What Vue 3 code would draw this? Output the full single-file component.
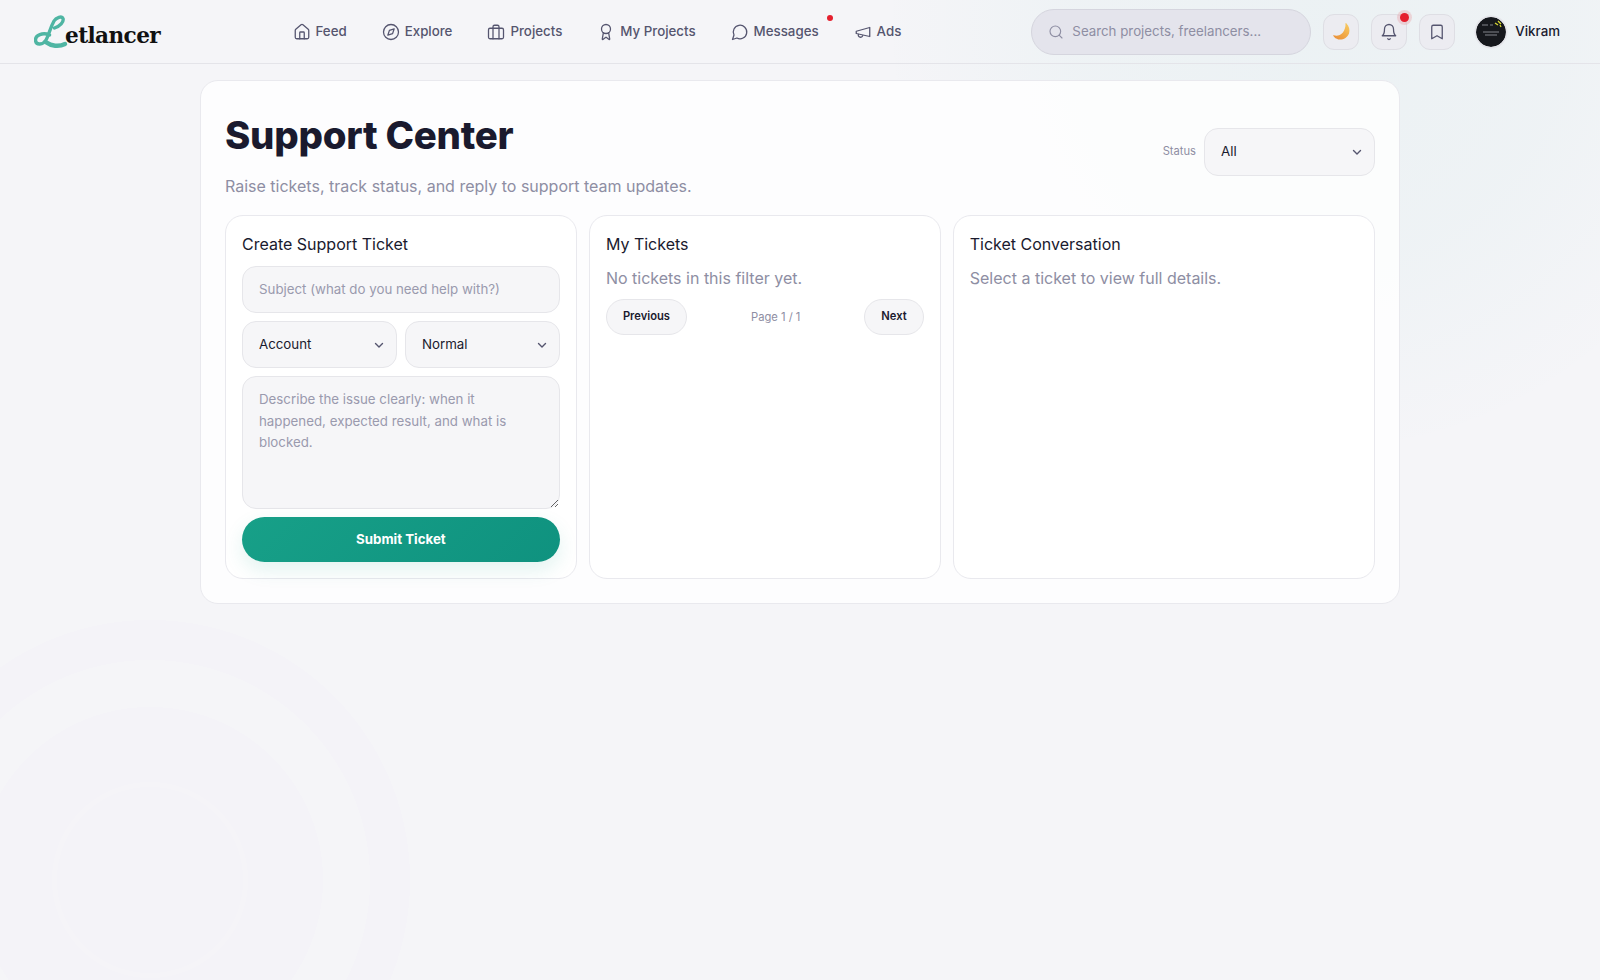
<template>
  <div class="page">
    <header class="topbar">
      <div class="logo" aria-label="Letlancer">
        <svg class="logo-mark" viewBox="0 0 34 36" fill="none" stroke="#4fb5a3" stroke-linecap="round">
          <path stroke-width="3.400" d="M15.500 21C9 18 1 21 1.500 26.500C2 31.500 9 31 12 26C15 21 16 14 20 7C22 3.500 28 1.500 29 4.500C30 8 26 12 20.500 14"/>
          <path stroke-width="4.400" d="M12.500 28.500C17 32 25 33 31 30"/>
        </svg>
        <span class="logo-word">etlancer</span>
      </div>
      <nav class="nav">
        <a v-for="item in navItems" :key="item.label" class="nav-item">
          <svg class="icon" viewBox="0 0 24 24"><path v-for="d in item.paths" :key="d" :d="d" /></svg>
          <span class="nudge">{{ item.label }}</span>
          <i v-if="item.dot" class="nav-dot"></i>
        </a>
      </nav>
      <div class="top-actions">
        <label class="search">
          <svg class="icon search-icon" viewBox="0 0 24 24"><path d="M19 11a8 8 0 1 1-16 0a8 8 0 1 1 16 0" /><path d="m21 21-4.300-4.300" /></svg>
          <input type="text" placeholder="Search projects, freelancers..." />
        </label>
        <button class="icon-btn" type="button" aria-label="Theme">
          <svg class="moon" viewBox="0 0 24 24">
            <defs>
              <linearGradient id="moonFill" x1="0.9" y1="0" x2="0.2" y2="1">
                <stop offset="0" stop-color="#f7cc62" />
                <stop offset="0.55" stop-color="#f2aa48" />
                <stop offset="1" stop-color="#e9913a" />
              </linearGradient>
            </defs>
            <path fill="url(#moonFill)" d="M18 1.500C21.500 5 23 10 21.500 14.500C19.500 20 13.500 23 8 22C5.500 21.500 3 20 1.500 17.500C1.200 17 1.600 16.500 2.200 16.700C6 18 10.500 17 13.500 13.500C16 10.500 17.500 6 17 2C17 1.500 17.500 1.200 18 1.500Z" />
          </svg>
        </button>
        <button class="icon-btn has-badge" type="button" aria-label="Notifications">
          <svg class="icon" viewBox="0 0 24 24"><path d="M6 8a6 6 0 0 1 12 0c0 7 3 9 3 9H3s3-2 3-9" /><path d="M10.300 21a1.940 1.940 0 0 0 3.400 0" /></svg>
          <i class="badge"></i>
        </button>
        <button class="icon-btn" type="button" aria-label="Saved">
          <svg class="icon" viewBox="0 0 24 24"><path d="m19 21-7-4-7 4V5a2 2 0 0 1 2-2h10a2 2 0 0 1 2 2v16z" /></svg>
        </button>
        <div class="user">
          <svg class="avatar" viewBox="0 0 30 30">
            <circle cx="15" cy="15" r="15" fill="#16181d" />
            <path d="M6 8h6M14 8h3M7 15h16M9 18h12" stroke="#cfd2d6" stroke-width="0.6" fill="none" />
            <path d="M19 6l3 2M22 4l3 3M24 8l1 2" stroke="#d8d832" stroke-width="1.300" fill="none" />
          </svg>
          <span class="nudge">Vikram</span>
        </div>
      </div>
    </header>

    <main class="panel">
      <div class="panel-head">
        <div>
          <h1>Support Center</h1>
          <p class="subtitle">Raise tickets, track status, and reply to support team updates.</p>
        </div>
        <label class="status">
          <span class="nudge">Status</span>
          <select class="field select status-select">
            <option>All</option>
          </select>
        </label>
      </div>

      <div class="columns">
        <section class="card">
          <h2>Create Support Ticket</h2>
          <form class="form" @submit.prevent>
            <input class="field" type="text" placeholder="Subject (what do you need help with?)" />
            <div class="form-row">
              <select class="field select"><option>Account</option></select>
              <select class="field select"><option>Normal</option></select>
            </div>
            <textarea class="field area" placeholder="Describe the issue clearly: when it happened, expected result, and what is blocked."></textarea>
            <button class="submit" type="submit">Submit Ticket</button>
          </form>
        </section>

        <section class="card">
          <h2>My Tickets</h2>
          <p class="muted">No tickets in this filter yet.</p>
          <div class="pager">
            <button class="pill" type="button">Previous</button>
            <span>Page 1 / 1</span>
            <button class="pill" type="button">Next</button>
          </div>
        </section>

        <section class="card">
          <h2>Ticket Conversation</h2>
          <p class="muted">Select a ticket to view full details.</p>
        </section>
      </div>
    </main>
  </div>
</template>

<script setup>
const navItems = [
  {
    label: 'Feed',
    paths: [
      'M15 21v-8a1 1 0 0 0-1-1h-4a1 1 0 0 0-1 1v8',
      'M3 10a2 2 0 0 1 .709-1.528l7-5.999a2 2 0 0 1 2.582 0l7 5.999A2 2 0 0 1 21 10v9a2 2 0 0 1-2 2H5a2 2 0 0 1-2-2z',
    ],
  },
  {
    label: 'Explore',
    paths: [
      'M22 12a10 10 0 1 1-20 0a10 10 0 1 1 20 0',
      'm16.240 7.760-2.120 6.360-6.360 2.120 2.120-6.360 6.360-2.120z',
    ],
  },
  {
    label: 'Projects',
    paths: [
      'M4 7h16a2 2 0 0 1 2 2v10a2 2 0 0 1-2 2H4a2 2 0 0 1-2-2V9a2 2 0 0 1 2-2z',
      'M16 21V5a2 2 0 0 0-2-2h-4a2 2 0 0 0-2 2v16',
    ],
  },
  {
    label: 'My Projects',
    paths: [
      'm15.477 12.890 1.515 8.526a.5.5 0 0 1-.81.470l-3.580-2.687a1 1 0 0 0-1.197 0l-3.586 2.686a.5.5 0 0 1-.81-.469l1.514-8.526',
      'M18 8a6 6 0 1 1-12 0a6 6 0 1 1 12 0',
    ],
  },
  { label: 'Messages', dot: true, paths: ['M7.900 20A9 9 0 1 0 4 16.100L2 22Z'] },
  { label: 'Ads', paths: ['m3 11 18-5v12L3 14v-3z', 'M11.600 16.800a3 3 0 1 1-5.800-1.600'] },
]
</script>

<style>
html, body { margin: 0; background: #f5f5f8; }
</style>

<style scoped>
* { box-sizing: border-box; }
.page {
  min-height: 980px;
  font-family: Inter, "Liberation Sans", sans-serif;
  color: #1a1a2e;
  background:
    radial-gradient(circle 440px at 1320px 20px, rgba(30, 165, 150, 0.045) 0%, rgba(30, 165, 150, 0.03) 55%, transparent 100%),
    radial-gradient(circle at 150px 880px, #f4f3f8 0 93px, #f5f4f8 93px 98px, #f4f3f8 98px 173px, #f5f5f8 173px 220px, #f4f3f8 220px 260px, transparent 260px),
    #f5f5f8;
}
.topbar {
  height: 64px;
  display: flex;
  align-items: center;
  padding: 0 40px 0 34px;
  border-bottom: 1px solid #e4e4e9;
}
.logo { width: 258.500px; flex: none; display: flex; align-items: flex-end; height: 36px; }
.logo-mark { width: 34px; height: 36px; flex: none; }
.logo-word {
  font-family: "DejaVu Serif", serif;
  font-weight: 700;
  font-size: 21.600px;
  line-height: 26px;
  letter-spacing: -0.6px;
  color: #111;
  margin-left: -3px;
  margin-bottom: 1px;
}
.nav { display: flex; align-items: center; gap: 35px; }
.nav-item {
  position: relative;
  display: flex;
  align-items: center;
  gap: 5px;
  font-size: 13.300px;
  font-weight: 500;
  color: #55556f;
  white-space: nowrap;
}
.nudge { padding-bottom: 2px; }
.icon {
  width: 18px;
  height: 18px;
  fill: none;
  stroke: #55556f;
  stroke-width: 1.700;
  stroke-linecap: round;
  stroke-linejoin: round;
  flex: none;
}
.nav-dot {
  position: absolute;
  right: -14px;
  top: -8px;
  width: 6px;
  height: 6px;
  border-radius: 50%;
  background: #e5202e;
}
.top-actions { margin-left: auto; display: flex; align-items: center; gap: 12px; }
.search {
  width: 280px;
  height: 46px;
  display: flex;
  align-items: center;
  gap: 8px;
  padding: 0 16px;
  border-radius: 23px;
  background: #e4e4ec;
  border: 1px solid #d5d5de;
}
.search-icon { stroke: #8e8ea3; width: 16px; height: 16px; }
.search input {
  flex: 1;
  min-width: 0;
  border: 0;
  outline: 0;
  background: transparent;
  padding: 0 0 2px;
  font: 400 13.300px Inter, "Liberation Sans", sans-serif;
  color: #1a1a2e;
}
.search input::placeholder { color: #8e8ea3; opacity: 1; }
.icon-btn {
  position: relative;
  width: 36px;
  height: 36px;
  padding: 0;
  display: flex;
  align-items: center;
  justify-content: center;
  background: #ececf1;
  border: 1px solid #dedee4;
  border-radius: 11px;
}
.moon { width: 19px; height: 19px; }
.badge {
  position: absolute;
  top: -2px;
  right: -3px;
  width: 9px;
  height: 9px;
  border-radius: 50%;
  background: #e5202e;
  box-shadow: 0 0 0 3px rgba(229, 32, 46, 0.14);
}
.user {
  display: flex;
  align-items: center;
  gap: 9px;
  margin-left: 9px;
  font-size: 13.300px;
  font-weight: 500;
  color: #1a1a2e;
}
.avatar {
  width: 30px;
  height: 30px;
  border-radius: 50%;
  box-shadow: 0 0 0 1.500px #e4e4e9;
}
.panel {
  width: 1200px;
  margin: 16px auto 0;
  padding: 24px;
  background: rgba(255, 255, 255, 0.82);
  border: 1px solid #e9e9ee;
  border-radius: 18px;
}
.panel-head {
  display: flex;
  align-items: center;
  justify-content: space-between;
  margin-bottom: 17px;
}
h1 {
  margin: 0;
  font-size: 38.400px;
  line-height: 60px;
  font-weight: 800;
  letter-spacing: -0.25px;
  color: #1a1a2e;
}
.subtitle {
  margin: 9px 0 0;
  font-size: 16px;
  line-height: 24px;
  color: #8e8ea3;
}
.status { display: flex; align-items: center; gap: 8px; font-size: 11.200px; color: #8e8ea3; }
.columns {
  display: grid;
  grid-template-columns: 1fr 1fr 1.200fr;
  gap: 12px;
}
.card {
  min-height: 364px;
  padding: 16px;
  background: #fff;
  border: 1px solid #e9e9ee;
  border-radius: 18px;
}
h2 {
  margin: 0;
  font-size: 16px;
  line-height: 24px;
  font-weight: 400;
  color: #1a1a2e;
}
.form { margin-top: 10px; display: flex; flex-direction: column; gap: 8px; }
.form-row { display: grid; grid-template-columns: 1fr 1fr; gap: 8px; }
.field {
  width: 100%;
  height: 47px;
  padding: 0 16px 2px;
  border: 1px solid #e6e6ea;
  border-radius: 14px;
  background-color: rgba(245, 245, 247, 0.9);
  outline: 0;
  font: 400 13.300px Inter, "Liberation Sans", sans-serif;
  color: #1a1a2e;
}
.status .status-select { width: 171px; height: 48px; }
.field::placeholder { color: #9a9aae; opacity: 1; }
.select {
  appearance: none;
  background-image: url("data:image/svg+xml,%3Csvg xmlns='http://www.w3.org/2000/svg' viewBox='0 0 12 12' fill='none' stroke='%2355556f' stroke-width='1.4' stroke-linecap='round' stroke-linejoin='round'%3E%3Cpath d='M2.500 4.500 6 8l3.500-3.500'/%3E%3C/svg%3E");
  background-repeat: no-repeat;
  background-position: right 11px center;
  background-size: 12px 12px;
}
.area {
  height: 133px;
  padding: 12px 16px;
  line-height: 21.500px;
  resize: vertical;
  display: block;
}
.submit {
  height: 45px;
  padding-bottom: 2px;
  border: 0;
  border-radius: 23px;
  background: linear-gradient(135deg, #17a088, #0f927f);
  color: #fff;
  font: 700 13.300px Inter, "Liberation Sans", sans-serif;
  box-shadow: 0 8px 20px rgba(20, 160, 133, 0.12);
}
.muted {
  margin: 10px 0 0;
  font-size: 16px;
  line-height: 24px;
  color: #8e8ea3;
}
.pager {
  margin-top: 9px;
  display: flex;
  align-items: center;
  justify-content: space-between;
  font-size: 11.200px;
  color: #8e8ea3;
}
.pill {
  height: 36px;
  padding: 0 16px 2px;
  border: 1px solid #e6e6ea;
  border-radius: 18px;
  background: #f6f6f8;
  color: #1a1a2e;
  font: 600 11.200px Inter, "Liberation Sans", sans-serif;
}
</style>
